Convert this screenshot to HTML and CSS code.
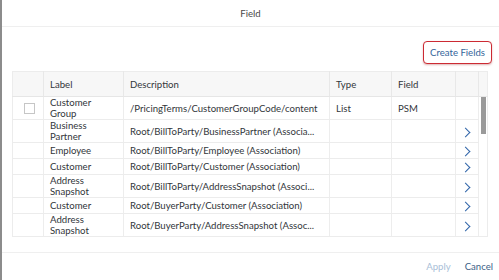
FILE: index.html
```html
<!DOCTYPE html>
<html>
<head>
<meta charset="utf-8">
<link rel="stylesheet" href="styles.css">
</head>
<body>
<div class="dialog">
  <div class="header">Field</div>
  <div class="toolbar">
    <button class="create">Create Fields</button>
  </div>
  <div class="tablewrap">
    <table class="grid">
      <colgroup>
        <col class="c-sel"><col class="c-label"><col class="c-desc"><col class="c-type"><col class="c-field"><col class="c-nav"><col class="c-scroll">
      </colgroup>
      <thead>
        <tr><th></th><th>Label</th><th>Description</th><th>Type</th><th>Field</th><th></th><th class="scrollhead"></th></tr>
      </thead>
      <tbody>
        <tr class="two"><td><span class="cb"></span></td><td>Customer<br>Group</td><td>/PricingTerms/CustomerGroupCode/content</td><td>List</td><td>PSM</td><td></td><td class="scroll" rowspan="7"><div class="thumb"></div></td></tr>
        <tr class="two"><td></td><td>Business<br>Partner</td><td>Root/BillToParty/BusinessPartner (Associa...</td><td></td><td></td><td class="nav"><span class="chev"></span></td></tr>
        <tr class="one"><td></td><td>Employee</td><td>Root/BillToParty/Employee (Association)</td><td></td><td></td><td class="nav"><span class="chev"></span></td></tr>
        <tr class="one"><td></td><td>Customer</td><td>Root/BillToParty/Customer (Association)</td><td></td><td></td><td class="nav"><span class="chev"></span></td></tr>
        <tr class="two"><td></td><td>Address<br>Snapshot</td><td>Root/BillToParty/AddressSnapshot (Associ...</td><td></td><td></td><td class="nav"><span class="chev"></span></td></tr>
        <tr class="one"><td></td><td>Customer</td><td>Root/BuyerParty/Customer (Association)</td><td></td><td></td><td class="nav"><span class="chev"></span></td></tr>
        <tr class="two"><td></td><td>Address<br>Snapshot</td><td>Root/BuyerParty/AddressSnapshot (Assoc...</td><td></td><td></td><td class="nav"><span class="chev"></span></td></tr>
      </tbody>
    </table>
  </div>
  <div class="footer">
    <button class="btn apply">Apply</button>
    <button class="btn cancel">Cancel</button>
  </div>
</div>
</body>
</html>
```
FILE: styles.css
```css
html, body {
  margin: 0;
  padding: 0;
  background: #ffffff;
}
body {
  font-family: "Lato", "Noto Sans", sans-serif;
  font-size: 9.6px;
  color: #32363a;
}
.dialog {
  width: 497px;
  height: 280px;
  border-left: 2px solid #8c8c8c;
  display: flex;
  flex-direction: column;
}
.header {
  height: 27px;
  line-height: 27px;
  text-align: center;
  border-bottom: 1px solid #efefef;
  font-size: 9.6px;
  color: #4a4a4a;
  box-sizing: border-box;
}
.toolbar {
  height: 44px;
  display: flex;
  justify-content: flex-end;
  align-items: flex-start;
  padding-top: 14px;
  padding-right: 7px;
  box-sizing: border-box;
}
.create {
  font-family: inherit;
  font-size: 9.6px;
  color: #34659a;
  background: #fff;
  border: 1.5px solid #cc2a33;
  border-radius: 4px;
  box-shadow: 0 1px 2px rgba(160, 40, 40, 0.35);
  height: 23px;
  width: 69px;
  padding: 0;
  cursor: pointer;
}
.tablewrap {
  margin-left: 10px;
  width: 475px;
}
.grid {
  border-collapse: collapse;
  table-layout: fixed;
  width: 475px;
  border: 1px solid #ececec;
}
.c-sel { width: 31px; }
.c-label { width: 80px; }
.c-desc { width: 206px; }
.c-type { width: 62px; }
.c-field { width: 64px; }
.c-nav { width: 23px; }
.c-scroll { width: 9px; }
.grid th {
  background: #f7f7f7;
  height: 25px;
  font-weight: normal;
  text-align: left;
  padding: 0 6px;
  border-right: 1px solid #e8e8e8;
  border-bottom: 1px solid #e6e6e6;
  box-sizing: border-box;
  color: #32363a;
}
.grid th.scrollhead {
  border-right: none;
  padding: 0;
}
.grid td {
  padding: 0 6px;
  border-right: 1px solid #ededed;
  border-bottom: 1px solid #ececec;
  line-height: 11px;
  vertical-align: middle;
  white-space: nowrap;
  overflow: hidden;
}
.grid tr.two td { height: 22px; }
.grid tr.one td { height: 15px; }
.grid td.nav {
  padding: 0;
  text-align: center;
}
.grid td.scroll {
  padding: 0;
  vertical-align: top;
  border-right: none;
  border-bottom: none;
  background: #ffffff;
}
.thumb {
  width: 5px;
  height: 37px;
  margin-left: 2px;
  background: #9a9a9a;
}
.cb {
  display: inline-block;
  width: 9px;
  height: 9px;
  border: 1px solid #c6c6c6;
  margin-left: 5px;
  vertical-align: middle;
}
.chev {
  display: inline-block;
  width: 6px;
  height: 6px;
  border-right: 1.6px solid #2f64a8;
  border-top: 1.6px solid #2f64a8;
  transform: rotate(45deg);
  margin-left: -3px;
  vertical-align: middle;
}
.footer {
  margin-top: auto;
  height: 27px;
  border-top: 1px solid #efefef;
  display: flex;
  justify-content: flex-end;
  align-items: center;
  padding-right: 6px;
  gap: 14px;
}
.btn {
  font-family: inherit;
  font-size: 9.6px;
  background: none;
  border: none;
  padding: 0;
}
.apply { color: #a9c0d8; }
.cancel { color: #3b5f88; }
```
